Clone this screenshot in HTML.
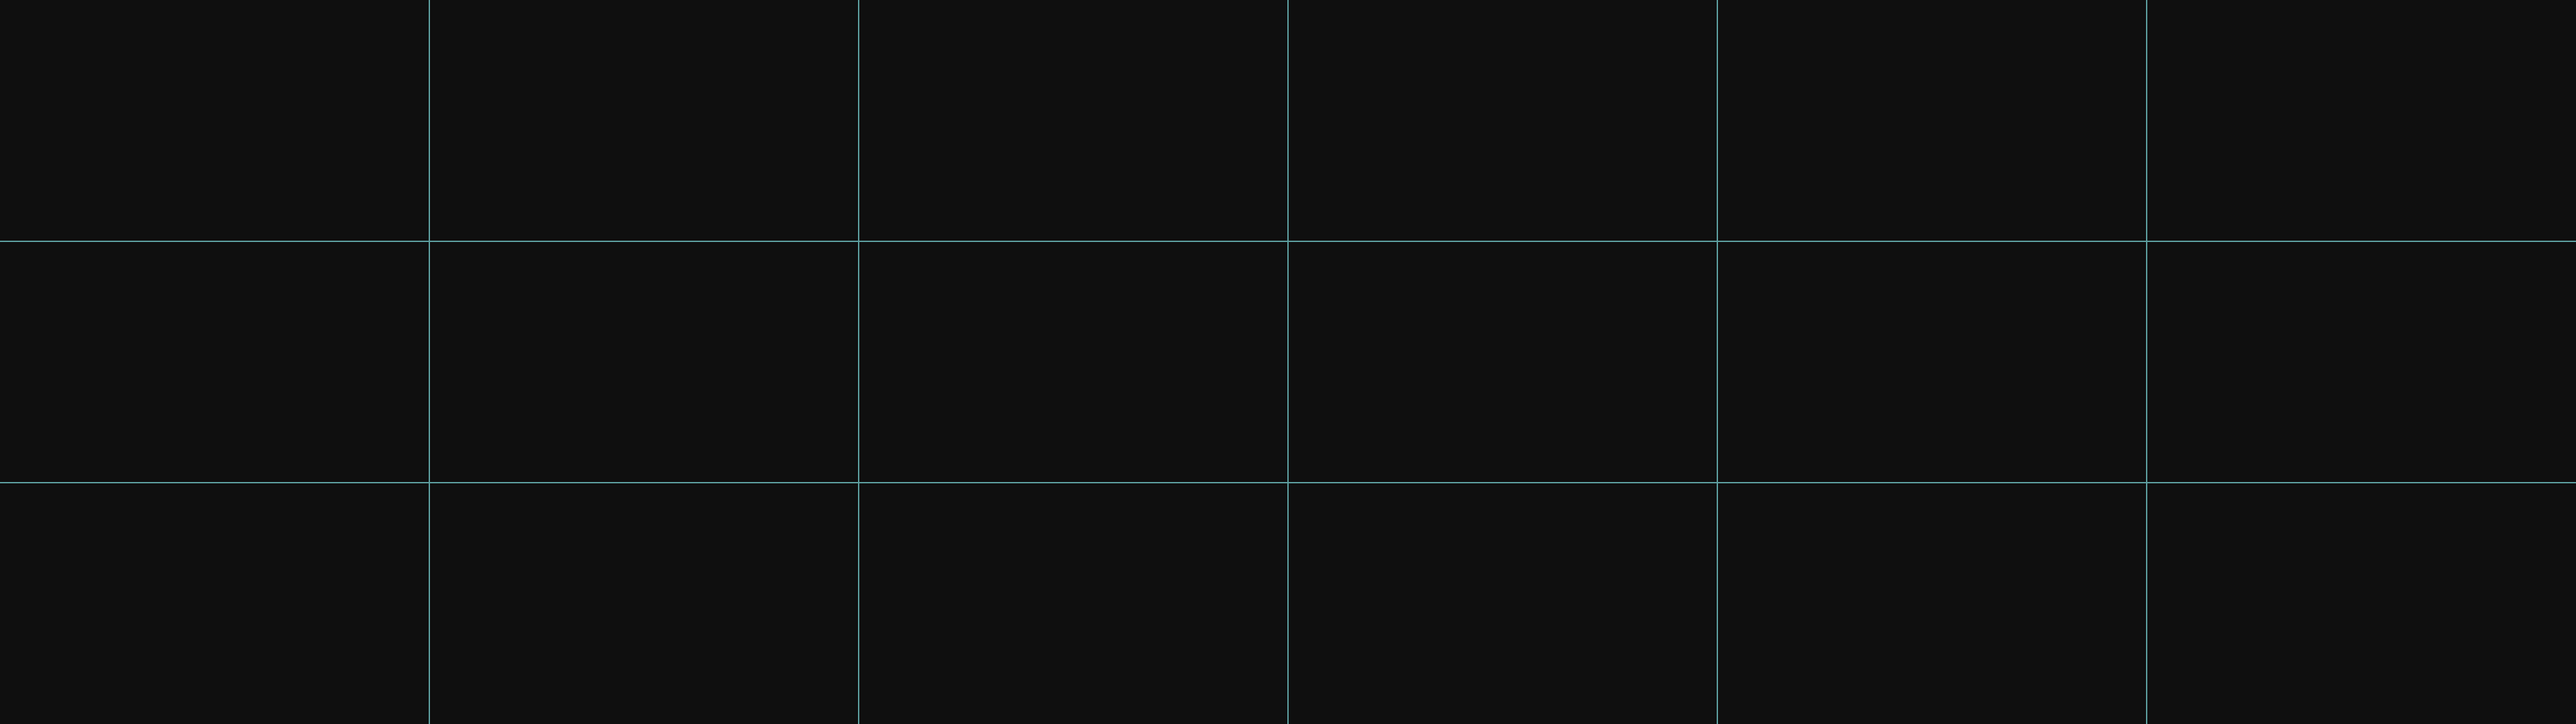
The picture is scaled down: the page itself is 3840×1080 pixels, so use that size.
<!DOCTYPE html>
<html><head><meta charset="utf-8"><style>
html,body{margin:0;padding:0;width:3840px;height:1080px;background:#0f0f0f;overflow:hidden;position:relative}
.v{position:absolute;top:0;width:2px;height:1080px;background:#5d9fa0}
.h{position:absolute;left:0;height:2px;width:3840px;background:#5d9fa0}
</style></head><body>
<div class="v" style="left:639px"></div>
<div class="v" style="left:1279px"></div>
<div class="v" style="left:1919px"></div>
<div class="v" style="left:2559px"></div>
<div class="v" style="left:3199px"></div>
<div class="h" style="top:359px"></div>
<div class="h" style="top:719px"></div>
</body></html>
